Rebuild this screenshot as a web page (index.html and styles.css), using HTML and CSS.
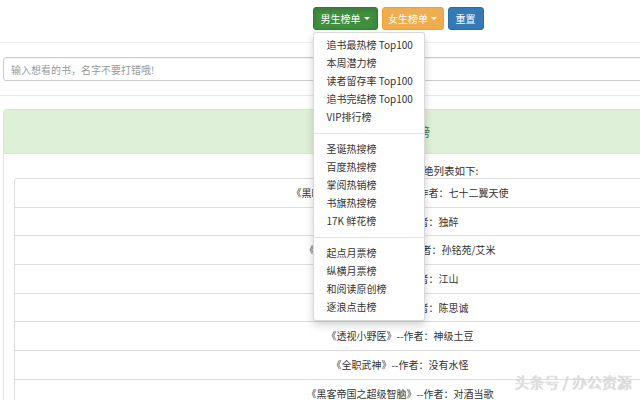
FILE: index.html
```html
<!DOCTYPE html>
<html lang="zh">
<head>
<meta charset="utf-8">
<title>排行榜</title>
<link rel="stylesheet" href="styles.css">
</head>
<body>
<div class="page">
  <div class="topbar">
    <div class="dropdown">
      <button class="btn btn-success active">男生榜单 <span class="caret"></span></button>
      <ul class="menu">
        <li>追书最热榜 Top100</li>
        <li>本周潜力榜</li>
        <li>读者留存率 Top100</li>
        <li>追书完结榜 Top100</li>
        <li>VIP排行榜</li>
        <li class="divider"></li>
        <li>圣诞热搜榜</li>
        <li>百度热搜榜</li>
        <li>掌阅热销榜</li>
        <li>书旗热搜榜</li>
        <li>17K 鲜花榜</li>
        <li class="divider"></li>
        <li>起点月票榜</li>
        <li>纵横月票榜</li>
        <li>和阅读原创榜</li>
        <li>逐浪点击榜</li>
      </ul>
    </div>
    <button class="btn btn-warning">女生榜单 <span class="caret"></span></button>
    <button class="btn btn-primary">重置</button>
  </div>
  <div class="search">
    <input class="search-input" type="text" placeholder="输入想看的书，名字不要打错哦!">
  </div>
  <div class="panel">
    <div class="panel-heading">追书最热榜</div>
    <div class="panel-body">
      <p class="intro">追书最热榜Top100 拒绝列表如下:</p>
      <ul class="list">
        <li>《黑暗血时代之末日降临》--作者：七十二翼天使</li>
        <li>《贴身兵王》--作者：独醉</li>
        <li>《余罪之沉默的证人》--作者：孙铭苑/艾米</li>
        <li>《逆天邪神》--作者：江山</li>
        <li>《唐人街探案》--作者：陈思诚</li>
        <li>《透视小野医》--作者：神级土豆</li>
        <li>《全职武神》--作者：没有水怪</li>
        <li>《黑客帝国之超级智脑》--作者：对酒当歌</li>
      </ul>
    </div>
  </div>
</div>
<div class="watermark">头条号 / 办公资源</div>
</body>
</html>
```
FILE: styles.css
```css
html, body {
  margin: 0;
  padding: 0;
  overflow: hidden;
  background: #fff;
}
body {
  font-family: "Noto Sans CJK SC", "Noto Sans", sans-serif;
  font-size: 10px;
  line-height: 14px;
  color: #333;
  width: 640px;
  height: 400px;
  position: relative;
}
.page {
  width: 800px;
}
.topbar {
  display: flex;
  justify-content: center;
  gap: 4px;
  padding: 7px 4px 12px 0;
  border-bottom: 1px solid #f0f0f0;
}
.dropdown {
  position: relative;
}
.btn {
  font-family: inherit;
  font-size: 10px;
  line-height: 13px;
  padding: 4px 7px;
  border: 1px solid transparent;
  border-radius: 3px;
  color: #fff;
  margin: 0;
  display: inline-flex;
  align-items: center;
  gap: 3px;
}
.btn-success {
  background: #3f8f3f;
  border-color: #357a35;
}
.btn-success.active {
  box-shadow: inset 0 2px 4px rgba(0,0,0,.15);
}
.btn-warning {
  background: #f0ad4e;
  border-color: #eea236;
  padding: 4px 5.5px;
}
.btn-primary {
  background: #337ab7;
  border-color: #2e6da4;
}
.caret {
  display: inline-block;
  width: 0;
  height: 0;
  border-top: 3px solid #fff;
  border-left: 3px solid transparent;
  border-right: 3px solid transparent;
}
.menu {
  position: absolute;
  left: 0;
  top: 25px;
  width: 110px;
  margin: 0;
  padding: 3px 0 4px;
  list-style: none;
  background: #fff;
  border: 1px solid rgba(0,0,0,.15);
  border-radius: 3px;
  box-shadow: 0 4px 9px rgba(0,0,0,.18);
  z-index: 10;
}
.menu li {
  padding: 2px 13px;
  line-height: 14px;
  white-space: nowrap;
  color: #333;
}
.menu li.divider {
  padding: 0;
  height: 1px;
  margin: 7px 0 6px;
  background: #e5e5e5;
}
.search {
  padding: 14px 3px 14px;
  border-bottom: 1px solid #e8e8e8;
}
.search-input {
  display: block;
  box-sizing: border-box;
  width: 100%;
  height: 24px;
  padding: 4px 7px;
  font-family: inherit;
  font-size: 10px;
  color: #555;
  border: 1px solid #ccc;
  border-radius: 3px;
  box-shadow: inset 0 1px 1px rgba(0,0,0,.06);
}
.search-input::placeholder {
  color: #999;
}
.panel {
  margin: 13px 3px 0;
  border: 1px solid #d6e9c6;
  border-radius: 3px;
}
.panel-heading {
  background: #dff0d8;
  color: #3c763d;
  text-align: center;
  font-size: 12px;
  line-height: 17px;
  padding: 13px 10px;
  border-bottom: 1px solid #d6e9c6;
}
.panel-body {
  padding: 10px;
}
.intro {
  margin: 0;
  text-align: center;
  font-size: 10.5px;
  line-height: 14px;
}
.list {
  list-style: none;
  margin: 0;
  padding: 0;
}
.list li {
  border: 1px solid #ddd;
  margin-bottom: -1px;
  padding: 7px 10px 6.7px;
  text-align: center;
  line-height: 14px;
}
.list li:first-child {
  border-radius: 3px 3px 0 0;
}
.watermark {
  position: absolute;
  right: 8px;
  bottom: 9px;
  font-size: 15px;
  line-height: 18px;
  color: #e2e2e2;
  text-shadow: 0 0 1px #a8a8a8;
}
```
